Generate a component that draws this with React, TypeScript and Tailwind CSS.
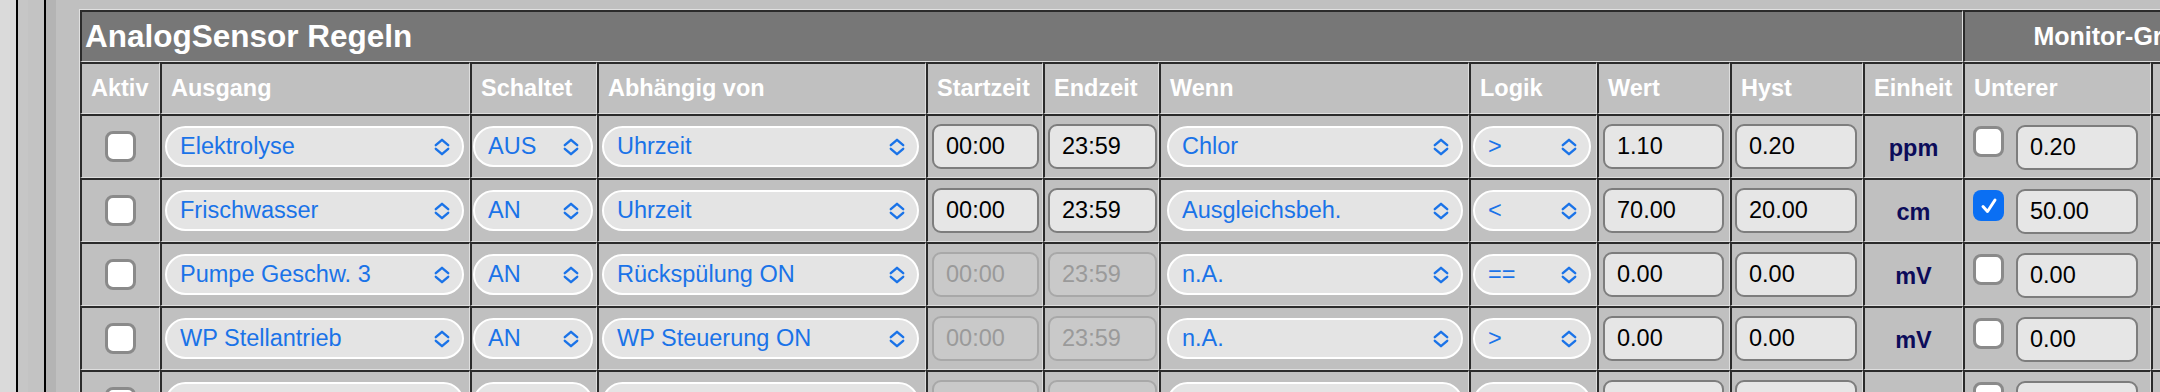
import React from 'react';

type Row = {
  aktiv: boolean;
  ausgang: string;
  schaltet: string;
  abhaengig: string;
  start: string;
  end: string;
  timeEnabled: boolean;
  wenn: string;
  logik: string;
  wert: string;
  hyst: string;
  einheit: string;
  unterOn: boolean;
  unter: string;
};

const rows: Row[] = [
  { aktiv: false, ausgang: 'Elektrolyse', schaltet: 'AUS', abhaengig: 'Uhrzeit', start: '00:00', end: '23:59', timeEnabled: true, wenn: 'Chlor', logik: '>', wert: '1.10', hyst: '0.20', einheit: 'ppm', unterOn: false, unter: '0.20' },
  { aktiv: false, ausgang: 'Frischwasser', schaltet: 'AN', abhaengig: 'Uhrzeit', start: '00:00', end: '23:59', timeEnabled: true, wenn: 'Ausgleichsbeh.', logik: '<', wert: '70.00', hyst: '20.00', einheit: 'cm', unterOn: true, unter: '50.00' },
  { aktiv: false, ausgang: 'Pumpe Geschw. 3', schaltet: 'AN', abhaengig: 'Rückspülung ON', start: '00:00', end: '23:59', timeEnabled: false, wenn: 'n.A.', logik: '==', wert: '0.00', hyst: '0.00', einheit: 'mV', unterOn: false, unter: '0.00' },
  { aktiv: false, ausgang: 'WP Stellantrieb', schaltet: 'AN', abhaengig: 'WP Steuerung ON', start: '00:00', end: '23:59', timeEnabled: false, wenn: 'n.A.', logik: '>', wert: '0.00', hyst: '0.00', einheit: 'mV', unterOn: false, unter: '0.00' },
  { aktiv: false, ausgang: 'n.A.', schaltet: 'AN', abhaengig: 'n.A.', start: '00:00', end: '23:59', timeEnabled: false, wenn: 'n.A.', logik: '>', wert: '0.00', hyst: '0.00', einheit: 'mV', unterOn: false, unter: '0.00' },
];

const headers = ['Aktiv', 'Ausgang', 'Schaltet', 'Abhängig von', 'Startzeit', 'Endzeit', 'Wenn', 'Logik', 'Wert', 'Hyst', 'Einheit', 'Unterer', 'Oberer'];

// inset table cell: dark top/left, light bottom/right
const cell =
  'border-t-2 border-l-2 border-b border-r border-t-[#2b2b2b] border-l-[#2b2b2b] border-b-[#dedede] border-r-[#dedede] bg-[#c0c0c0]';

const Chevron: React.FC = () => (
  <svg width="16" height="18" viewBox="0 0 16 18" fill="none" stroke="currentColor" strokeWidth="2.4" strokeLinecap="round" strokeLinejoin="round" className="shrink-0">
    <path d="M1.8 7.2 L8 1.8 L14.2 7.2" />
    <path d="M1.8 10.8 L8 16.2 L14.2 10.8" />
  </svg>
);

const Select: React.FC<{ value: string }> = ({ value }) => (
  <div className="h-[41px] w-full rounded-full border-2 border-white bg-[#e4e4e4] flex items-center pl-[13px] pr-[12px] text-[#1a73e8] text-[23.5px]">
    <span className="flex-1 whitespace-nowrap overflow-hidden">{value}</span>
    <Chevron />
  </div>
);

const Input: React.FC<{ value: string; disabled?: boolean }> = ({ value, disabled }) => (
  <div
    className={
      disabled
        ? 'h-[45px] w-full rounded-[9px] border-2 border-[#a8a8a8] bg-[#c9c9c9] flex items-center pl-[12px] text-[23.5px] text-[#9a9a9a]'
        : 'h-[45px] w-full rounded-[9px] border-2 border-[#7d7d7d] bg-[#e6e6e6] flex items-center pl-[12px] text-[23.5px] text-black'
    }
  >
    {value}
  </div>
);

const Checkbox: React.FC<{ checked: boolean }> = ({ checked }) =>
  checked ? (
    <div className="w-[31px] h-[31px] rounded-[8px] bg-[#0a6ff3] flex items-center justify-center shrink-0">
      <svg width="20" height="20" viewBox="0 0 20 20" fill="none" stroke="white" strokeWidth="3" strokeLinecap="round" strokeLinejoin="round">
        <path d="M4 10.5 L8.5 15.5 L16 4" />
      </svg>
    </div>
  ) : (
    <div className="w-[31px] h-[31px] rounded-[8px] border-[3px] border-[#8a8a8a] bg-white shrink-0" />
  );

const LimitCell: React.FC<{ checked: boolean; value: string }> = ({ checked, value }) => (
  <div className={`${cell} h-[64px] flex items-start pt-[9px] pl-[8px] pr-[12px] gap-[12px]`}>
    <div className="mt-[1px]">
      <Checkbox checked={checked} />
    </div>
    <Input value={value} />
  </div>
);

const App: React.FC = () => {
  return (
    <div className="w-[2160px] h-[392px] overflow-hidden flex bg-[#c0c0c0] font-['Liberation_Sans',Arial,sans-serif]">
      {/* page frame stripes */}
      <div className="w-[16px] shrink-0 bg-[#dadada]" />
      <div className="w-[2px] shrink-0 bg-black" />
      <div className="w-[10px] shrink-0 bg-[#c6c6c6]" />
      <div className="w-[16px] shrink-0 bg-[#c3c3c3]" />
      <div className="w-[2px] shrink-0 bg-black" />
      <div className="w-[10px] shrink-0 bg-[#b4b4b4]" />
      <div className="w-[23px] shrink-0 bg-[#c0c0c0]" />

      <div className="pt-[9px] shrink-0">
        <div className="grid grid-cols-[80px_310px_127px_329px_117px_116px_310px_128px_133px_133px_100px_188px_188px] border-t border-l border-[#e0e0e0]">
          {/* title row */}
          <div className={`${cell} col-span-11 h-[52px] !bg-[#777777] flex items-center pl-[3px] text-white font-bold text-[31.5px]`}>
            AnalogSensor Regeln
          </div>
          <div className={`${cell} col-span-2 h-[52px] !bg-[#777777] flex items-center justify-center text-white font-bold text-[25px] whitespace-nowrap`}>
            Monitor-Grenzwerte
          </div>

          {/* header row */}
          {headers.map((h, i) => (
            <div key={i} className={`${cell} h-[52px] flex items-center pl-[9px] text-white font-bold text-[23.5px] whitespace-nowrap`}>
              {h}
            </div>
          ))}

          {/* data rows */}
          {rows.map((r, i) => (
            <React.Fragment key={i}>
              <div className={`${cell} h-[64px] flex items-center justify-center`}>
                <Checkbox checked={r.aktiv} />
              </div>
              <div className={`${cell} h-[64px] flex items-center pl-[3px] pr-[5px]`}>
                <Select value={r.ausgang} />
              </div>
              <div className={`${cell} h-[64px] flex items-center pl-[1px] pr-[3px]`}>
                <Select value={r.schaltet} />
              </div>
              <div className={`${cell} h-[64px] flex items-center pl-[3px] pr-[6px]`}>
                <Select value={r.abhaengig} />
              </div>
              <div className={`${cell} h-[64px] flex items-center pl-[4px] pr-[3px]`}>
                <Input value={r.start} disabled={!r.timeEnabled} />
              </div>
              <div className={`${cell} h-[64px] flex items-center pl-[3px] pr-[1px]`}>
                <Input value={r.end} disabled={!r.timeEnabled} />
              </div>
              <div className={`${cell} h-[64px] flex items-center pl-[6px] pr-[5px]`}>
                <Select value={r.wenn} />
              </div>
              <div className={`${cell} h-[64px] flex items-center pl-[2px] pr-[5px]`}>
                <Select value={r.logik} />
              </div>
              <div className={`${cell} h-[64px] flex items-center pl-[4px] pr-[5px]`}>
                <Input value={r.wert} />
              </div>
              <div className={`${cell} h-[64px] flex items-center pl-[3px] pr-[5px]`}>
                <Input value={r.hyst} />
              </div>
              <div className={`${cell} h-[64px] flex items-center justify-center text-[#0c0c5a] font-bold text-[23.5px] pt-[4px]`}>
                {r.einheit}
              </div>
              <LimitCell checked={r.unterOn} value={r.unter} />
              <LimitCell checked={false} value="0.00" />
            </React.Fragment>
          ))}
        </div>
      </div>
    </div>
  );
};

export default App;
